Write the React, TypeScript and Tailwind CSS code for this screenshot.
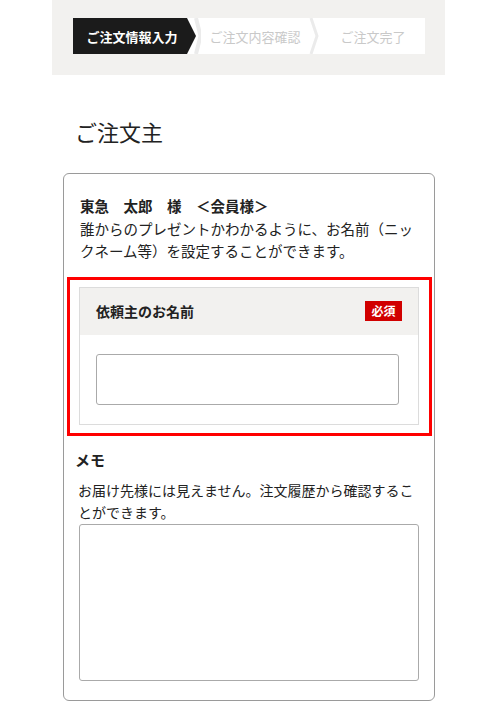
export default function App() {
  return (
    <div className="min-h-[714px] bg-white text-[#222] [font-family:'Noto_Sans_CJK_JP','Noto_Sans',sans-serif]">
      <div className="ml-[52px] w-[393px] bg-[#f2f1ef] pt-[18px] pb-[21px]">
        <div className="ml-[21px] flex h-[36px] w-[352px] bg-white text-[13px] leading-none">
          <div className="flex w-[114px] items-center justify-center bg-[#1b1b1b] pl-[4px] font-bold text-white">ご注文情報入力</div>
          <svg width="14" height="36" viewBox="0 0 14 36" className="shrink-0">
            <polyline points="9,0 13.5,18 9,36" fill="none" stroke="#ebebeb" strokeWidth="4" />
            <polygon points="0,0 9,18 0,36" fill="#1b1b1b" />
          </svg>
          <div className="flex w-[108px] items-center justify-center text-[#c9c9c9]">ご注文内容確認</div>
          <svg width="12" height="36" viewBox="0 0 12 36" className="shrink-0">
            <polyline points="2,0 8,18 2,36" fill="none" stroke="#ebebeb" strokeWidth="3" />
          </svg>
          <div className="flex flex-1 items-center justify-center text-[#c9c9c9]">ご注文完了</div>
        </div>
      </div>

      <h1 className="ml-[75px] mt-[40px] text-[22px] leading-[33px]">ご注文主</h1>

      <div className="ml-[63px] mt-[25px] w-[372px] rounded-[6px] border border-[#9a9a9a] px-[15px] pt-[21px] pb-[19px]">
        <div className="pl-[1px] text-[14.5px] leading-[22.5px]">
          <p className="font-bold">東急　太郎　様　＜会員様＞</p>
          <p>誰からのプレゼントかわかるように、お名前（ニックネーム等）を設定することができます。</p>
        </div>

        <div className="-ml-[12px] -mr-[13px] mt-[14px] border-[3px] border-[#ff0000] pt-[7px] pb-[8px] pl-[9px] pr-[10px]">
          <div className="border border-[#dcdcdc]">
            <div className="flex h-[47px] items-center justify-between bg-[#f2f1ef] pl-[16px] pr-[16px]">
              <span className="text-[14px] font-bold">依頼主のお名前</span>
              <span className="flex h-[20px] w-[37px] items-center justify-center bg-[#d10000] text-[12px] font-bold text-white">必須</span>
            </div>
            <div className="pl-[16px] pr-[19px] pt-[19px] pb-[19px]">
              <input type="text" className="block h-[51px] w-full rounded-[3px] border border-[#aaa] bg-white" />
            </div>
          </div>
        </div>

        <p className="-ml-[4px] mt-[13px] text-[15px] font-bold leading-[22px]">メモ</p>
        <p className="-ml-[1px] mt-[8px] text-[14px] leading-[22px]">お届け先様には見えません。注文履歴から確認することができます。</p>
        <textarea className="mt-[1px] block h-[157px] w-full resize-none rounded-[3px] border border-[#aaa]" />
      </div>
    </div>
  );
}
